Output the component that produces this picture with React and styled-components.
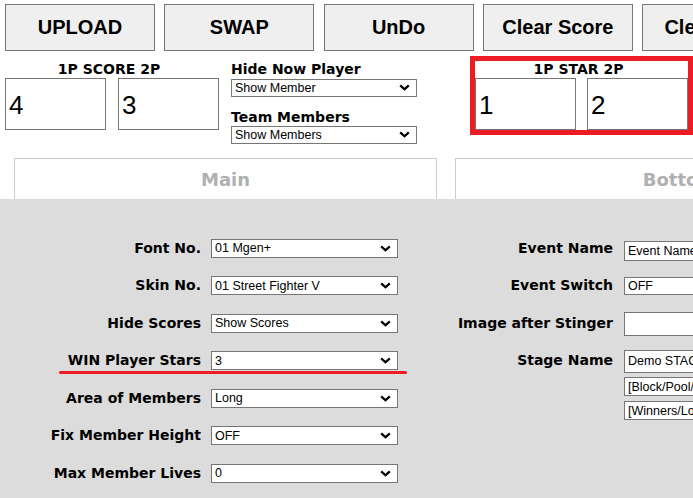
import React from 'react';
import styled, { createGlobalStyle } from 'styled-components';

const GlobalStyle = createGlobalStyle`
  html, body {
    margin: 0;
    padding: 0;
    overflow: hidden;
    background: #fff;
  }
`;

const Header = styled.div`
  padding: 4px 0 0 5px;
`;

const ButtonBar = styled.div`
  display: flex;
  gap: 9.3px;
`;

const ActionButton = styled.button`
  flex-shrink: 0;
  width: 150px;
  height: 47px;
  box-sizing: border-box;
  border: 1px solid #767676;
  border-radius: 0;
  background: #efefef;
  color: #000;
  font-family: 'Liberation Sans', Arial, sans-serif;
  font-weight: bold;
  font-size: 20px;
  white-space: nowrap;
  overflow: hidden;
  padding: 0;
`;

const ControlRow = styled.div`
  display: flex;
  align-items: flex-start;
  margin-top: 5px;
`;

const Caption = styled.div`
  font-family: 'DejaVu Sans', Verdana, sans-serif;
  font-weight: bold;
  font-size: 14px;
  line-height: 16px;
  color: #000;
  white-space: nowrap;
`;

const PairCaption = styled(Caption)`
  text-align: center;
  padding-right: 6px;
  height: 17px;
  line-height: 17px;
`;

const ScoreGroup = styled.div`
  display: flex;
  flex-direction: column;
  padding-top: 5px;
`;

const Pair = styled.div`
  display: flex;
  gap: ${({ $gap }) => $gap}px;
`;

const NumberBox = styled.input`
  width: 101px;
  height: 52px;
  box-sizing: border-box;
  border: 1px solid #767676;
  background: #fff;
  padding: 2px 3px 0;
  font-family: 'Liberation Sans', Arial, sans-serif;
  font-size: 26px;
  color: #000;
  outline: none;
`;

const MidGroup = styled.div`
  margin-left: 12px;
  padding-top: 5px;
  display: flex;
  flex-direction: column;
`;

const MidCaption = styled(Caption)`
  margin-top: ${({ $top }) => $top}px;
`;

const StarGroup = styled.div`
  margin-left: 53px;
  border: 5px solid #ed1c24;
  display: flex;
  flex-direction: column;
`;

const SelectWrap = styled.div`
  position: relative;
  flex-shrink: 0;
  width: ${({ $w }) => $w}px;
  height: ${({ $h }) => $h}px;
  margin-top: ${({ $top }) => $top || 0}px;
`;

const NativeSelect = styled.select`
  appearance: none;
  -webkit-appearance: none;
  width: 100%;
  height: 100%;
  box-sizing: border-box;
  border: 1px solid #767676;
  border-radius: 0;
  background: #fff;
  padding: 0 20px 0 3px;
  margin: 0;
  font-family: 'Liberation Sans', Arial, sans-serif;
  font-size: 12.5px;
  color: #000;
  outline: none;
`;

const Chevron = styled.svg`
  position: absolute;
  right: 7px;
  top: 50%;
  margin-top: -3px;
  pointer-events: none;
`;

const TextBox = styled.input`
  flex-shrink: 0;
  width: 220px;
  height: ${({ $h }) => $h}px;
  margin-top: ${({ $top }) => $top || 0}px;
  box-sizing: border-box;
  border: 1px solid #767676;
  background: #fff;
  padding: 0 3px;
  font-family: 'Liberation Sans', Arial, sans-serif;
  font-size: 12.5px;
  color: #000;
  outline: none;
`;

const TabBar = styled.div`
  display: flex;
  gap: 18px;
  padding-left: 14px;
  margin-top: 15px;
  white-space: nowrap;
`;

const Tab = styled.div`
  flex-shrink: 0;
  width: ${({ $w }) => $w}px;
  height: 41px;
  box-sizing: border-box;
  border: 1px solid #ccc;
  border-bottom: none;
  background: #fff;
  display: flex;
  align-items: center;
  justify-content: center;
  font-family: 'DejaVu Sans', Verdana, sans-serif;
  font-weight: bold;
  font-size: 18px;
  color: #b0b0b0;
`;

const Panel = styled.div`
  background: #dcdcdc;
  min-height: 320px;
  padding-top: 30px;
  display: flex;
  white-space: nowrap;
`;

const Column = styled.div`
  display: flex;
  flex-direction: column;
  flex-shrink: 0;
  margin-left: ${({ $left }) => $left}px;
`;

const FormRow = styled.div`
  position: relative;
  display: flex;
  align-items: center;
  height: 37.5px;

  ${({ $marked }) =>
    $marked &&
    `
    &::after {
      content: '';
      position: absolute;
      left: 59px;
      width: 348px;
      top: 29px;
      height: 3.5px;
      border-radius: 2px;
      background: #ed1c24;
    }
  `}
`;

const FieldLabel = styled(Caption)`
  width: ${({ $w }) => $w}px;
  margin-right: ${({ $gap }) => $gap}px;
  text-align: right;
  flex-shrink: 0;
`;

const ExtraFields = styled.div`
  display: flex;
  flex-direction: column;
  gap: 5px;
  margin-top: -2px;
  margin-left: 214px;
`;

const Select = ({ value, w = 187, h = 19, top }) => (
  <SelectWrap $w={w} $h={h} $top={top}>
    <NativeSelect defaultValue={value}>
      <option>{value}</option>
    </NativeSelect>
    <Chevron width="11" height="7" viewBox="0 0 11 7">
      <path d="M1.2 1.3 L5.5 5.3 L9.8 1.3" fill="none" stroke="#000" strokeWidth="2.3" />
    </Chevron>
  </SelectWrap>
);

const leftFields = [
  { label: 'Font No.', value: '01 Mgen+' },
  { label: 'Skin No.', value: '01 Street Fighter V' },
  { label: 'Hide Scores', value: 'Show Scores' },
  { label: 'WIN Player Stars', value: '3', marked: true },
  { label: 'Area of Members', value: 'Long' },
  { label: 'Fix Member Height', value: 'OFF' },
  { label: 'Max Member Lives', value: '0' },
];

export default function App() {
  return (
    <>
      <GlobalStyle />
      <Header>
        <ButtonBar>
          {['UPLOAD', 'SWAP', 'UnDo', 'Clear Score', 'Clear Stars'].map((t) => (
            <ActionButton key={t}>{t}</ActionButton>
          ))}
        </ButtonBar>

        <ControlRow>
          <ScoreGroup>
            <PairCaption>1P SCORE 2P</PairCaption>
            <Pair $gap={12}>
              <NumberBox defaultValue="4" />
              <NumberBox defaultValue="3" />
            </Pair>
          </ScoreGroup>

          <MidGroup>
            <MidCaption $top={0}>Hide Now Player</MidCaption>
            <Select value="Show Member" w={186} h={18} top={1} />
            <MidCaption $top={13}>Team Members</MidCaption>
            <Select value="Show Members" w={186} h={18} />
          </MidGroup>

          <StarGroup>
            <PairCaption>1P STAR 2P</PairCaption>
            <Pair $gap={11}>
              <NumberBox defaultValue="1" />
              <NumberBox defaultValue="2" />
            </Pair>
          </StarGroup>
        </ControlRow>
      </Header>

      <TabBar>
        <Tab $w={423}>Main</Tab>
        <Tab $w={450}>Bottom</Tab>
      </TabBar>

      <Panel>
        <Column $left={0}>
          {leftFields.map(({ label, value, marked }) => (
            <FormRow key={label} $marked={marked}>
              <FieldLabel $w={201} $gap={10}>{label}</FieldLabel>
              <Select value={value} />
            </FormRow>
          ))}
        </Column>

        <Column $left={12}>
          <FormRow>
            <FieldLabel $w={203} $gap={11}>Event Name</FieldLabel>
            <TextBox $h={20} $top={7} defaultValue="Event Name" />
          </FormRow>
          <FormRow>
            <FieldLabel $w={203} $gap={11}>Event Switch</FieldLabel>
            <Select value="OFF" w={220} h={18} />
          </FormRow>
          <FormRow>
            <FieldLabel $w={203} $gap={11}>Image after Stinger</FieldLabel>
            <TextBox $h={24} $top={3} defaultValue="" />
          </FormRow>
          <FormRow>
            <FieldLabel $w={203} $gap={11}>Stage Name</FieldLabel>
            <TextBox $h={23} $top={2} defaultValue="Demo STAGE" />
          </FormRow>
          <ExtraFields>
            <TextBox $h={19} defaultValue="[Block/Pool/Wave]" />
            <TextBox $h={19} defaultValue="[Winners/Losers]" />
          </ExtraFields>
        </Column>
      </Panel>
    </>
  );
}
